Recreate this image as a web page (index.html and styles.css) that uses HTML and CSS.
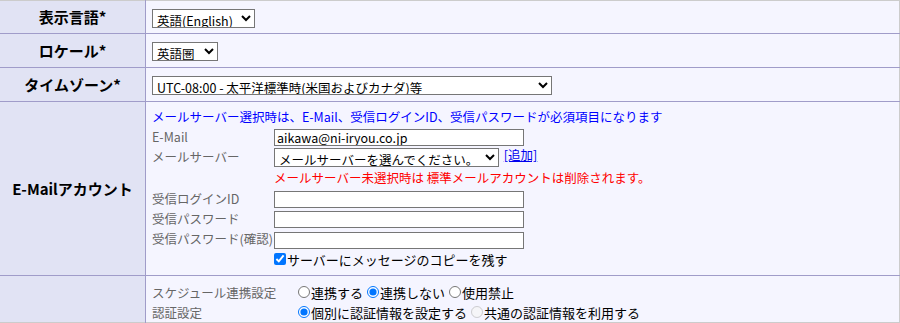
FILE: index.html
```html
<!DOCTYPE html>
<html lang="ja">
<head>
  <meta charset="UTF-8">
  <title>個人設定</title>
  <link rel="stylesheet" href="styles.css">
</head>
<body>

<table class="settings">
  <tr class="first">
    <th>表示言語*</th>
    <td>
      <select class="sel sel-lang">
        <option>英語(English)</option>
      </select>
    </td>
  </tr>
  <tr>
    <th>ロケール*</th>
    <td>
      <select class="sel sel-locale">
        <option>英語圏</option>
      </select>
    </td>
  </tr>
  <tr>
    <th>タイムゾーン*</th>
    <td>
      <select class="sel sel-tz">
        <option>UTC-08:00 - 太平洋標準時(米国およびカナダ)等</option>
      </select>
    </td>
  </tr>
  <tr class="mail-row">
    <th>E-Mailアカウント</th>
    <td>
      <div class="note">メールサーバー選択時は、E-Mail、受信ログインID、受信パスワードが必須項目になります</div>
      <div class="mail-grid">
        <span class="sub">E-Mail</span>
        <div><input class="txt" type="text" value="aikawa@ni-iryou.co.jp"></div>

        <span class="sub">メールサーバー</span>
        <div>
          <select class="sel sel-server">
            <option>メールサーバーを選んでください。</option>
          </select>
          <a href="#" class="add">[追加]</a>
        </div>

        <span></span>
        <div class="warn">メールサーバー未選択時は 標準メールアカウントは削除されます。</div>

        <span class="sub">受信ログインID</span>
        <div><input class="txt" type="text"></div>

        <span class="sub">受信パスワード</span>
        <div><input class="txt" type="password"></div>

        <span class="sub">受信パスワード(確認)</span>
        <div><input class="txt" type="password"></div>

        <span></span>
        <label class="check"><input type="checkbox" checked>サーバーにメッセージのコピーを残す</label>
      </div>
    </td>
  </tr>
  <tr class="sched-row">
    <th></th>
    <td>
      <div class="opt-grid">
        <span class="sub">スケジュール連携設定</span>
        <div class="radios">
          <label><input type="radio" name="link">連携する</label>
          <label><input type="radio" name="link" checked>連携しない</label>
          <label><input type="radio" name="link">使用禁止</label>
        </div>

        <span class="sub">認証設定</span>
        <div class="radios">
          <label><input type="radio" name="auth" checked>個別に認証情報を設定する</label>
          <label><input type="radio" name="auth" disabled>共通の認証情報を利用する</label>
        </div>
      </div>
    </td>
  </tr>
</table>

</body>
</html>
```

FILE: styles.css
```css
body {
  margin: 0;
  font-family: "Noto Sans CJK JP", "Noto Sans", sans-serif;
  font-size: 12.5px;
  color: #000;
  background: #fff;
}

.settings {
  width: 900px;
  border-collapse: collapse;
  border-top: 1px solid #cccccc;
  border-right: 1px solid #cccccc;
  border-bottom: 1px solid #cccccc;
}

.settings th,
.settings td {
  border-top: 1px solid #a09cc9;
  padding: 0;
}

.settings .first th,
.settings .first td {
  border-top: none;
  height: 32px;
}

.settings th {
  width: 145px;
  background: #e1e3f4;
  border-right: 1px solid #a09cc9;
  font-size: 15px;
  font-weight: bold;
  text-align: center;
  height: 33px;
  line-height: 20px;
}

.settings td {
  background: #f5f5ff;
  padding-left: 6px;
  height: 33px;
}

.sel {
  font-family: inherit;
  font-size: 12.5px;
  line-height: 15px;
  height: 19px;
  padding: 0;
  border: 1px solid #767676;
  border-radius: 0;
  background: #fff;
  color: #000;
  vertical-align: middle;
}

.sel-lang { width: 103px; }
.sel-locale { width: 66px; }
.sel-tz { width: 400px; }
.sel-server { width: 225px; }

.mail-row td {
  height: 166px;
  vertical-align: top;
  padding-top: 7px;
}

.note {
  color: #0000ff;
  line-height: 16px;
  height: 17px;
  white-space: nowrap;
}

.mail-grid {
  display: grid;
  grid-template-columns: 122px auto;
  grid-template-rows: 20px 20px 22px 20px 20px 21px 20px;
  align-items: center;
}

.sub {
  color: #666;
  line-height: 16px;
  white-space: nowrap;
  padding-top: 1px;
}

.txt {
  width: 250px;
  height: 17px;
  box-sizing: border-box;
  border: 1px solid #767676;
  padding: 0 2px;
  font-family: inherit;
  font-size: 12.5px;
  margin: 0;
  vertical-align: middle;
}

.add {
  color: #0000ee;
  margin-left: 2px;
}

.warn {
  color: #ff0000;
  line-height: 16px;
  padding-top: 2px;
  white-space: nowrap;
}

.check {
  display: flex;
  align-items: center;
  font-size: 13px;
  white-space: nowrap;
}

.check input {
  margin: 0 1px 0 0;
  width: 12px;
  height: 12px;
}

.sched-row td {
  height: 40px;
  vertical-align: top;
  padding-top: 6px;
}

.opt-grid {
  display: grid;
  grid-template-columns: 146px auto;
  grid-auto-rows: 20px;
  align-items: center;
}

.radios {
  display: flex;
  gap: 4px;
  font-size: 13px;
  white-space: nowrap;
}

.radios label {
  display: flex;
  align-items: center;
}

.radios input {
  margin: 0 1px 0 0;
  width: 12px;
  height: 12px;
}
```
